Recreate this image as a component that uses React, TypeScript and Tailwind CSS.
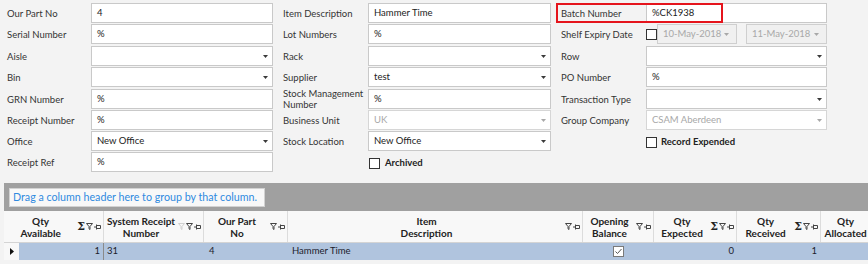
import React from 'react';

const Caret = ({ muted = false }: { muted?: boolean }) => (
  <svg width="5" height="3" viewBox="0 0 5 3" className="shrink-0">
    <path d="M0 0h5L2.5 3z" fill={muted ? '#a8a8a8' : '#3a3a3a'} />
  </svg>
);

const TextBox = ({ value = '' }: { value?: string }) => (
  <div className="flex-1 h-[20px] bg-white border border-[#c9c9c9] flex items-center px-[5px] text-[#222]">
    {value}
  </div>
);

const Combo = ({ value = '', disabled = false }: { value?: string; disabled?: boolean }) => (
  <div
    className={`flex-1 h-[20px] bg-white border flex items-center pl-[5px] pr-[4px] ${
      disabled ? 'border-[#d6d6d6] text-[#a8a8a8]' : 'border-[#c9c9c9] text-[#222]'
    }`}
  >
    <span className="flex-1">{value}</span>
    <Caret muted={disabled} />
  </div>
);

const DateBox = ({ value, w }: { value: string; w: string }) => (
  <div className={`${w} h-[20px] bg-[#f0f0f0] border border-[#cfcfcf] flex items-center pl-[5px] pr-[7px] text-[#a8a8a8]`}>
    <span className="flex-1">{value}</span>
    <Caret muted />
  </div>
);

const Box = () => <div className="w-[11px] h-[11px] shrink-0 bg-white border border-[#333]" />;

const Field = ({ label, labelW, children }: { label: React.ReactNode; labelW: string; children?: React.ReactNode }) => (
  <div className="flex items-center h-[20px]">
    <div className={`${labelW} shrink-0 leading-[11px] text-[#333]`}>{label}</div>
    {children}
  </div>
);

const rows = 'grid grid-rows-[21px_22px_21px_22px_21px_21px_21px_20px]';

const Funnel = ({ faint = false }: { faint?: boolean }) => (
  <svg width="7" height="7" viewBox="0 0 7 7" className="shrink-0">
    <path d="M0.5 0.5h6L4 3.5v3L3 5.8V3.5z" fill="none" stroke={faint ? '#cfcfcf' : '#444'} strokeWidth="1" />
  </svg>
);

const Pin = () => (
  <svg width="7" height="6" viewBox="0 0 7 6" className="shrink-0">
    <path d="M0 3h2.5M2.5 0.5v5M2.5 1.5h4v3h-4" fill="none" stroke="#444" strokeWidth="1" />
  </svg>
);

const Sigma = () => <span className="font-['DejaVu_Serif',serif] font-bold text-[11px] leading-none text-[#222]">Σ</span>;

const Head = ({
  w,
  children,
  sum = false,
  faint = false,
}: {
  w: string;
  children: React.ReactNode;
  sum?: boolean;
  faint?: boolean;
}) => (
  <div className={`${w} shrink-0 h-full flex items-center border-r border-[#dcdcdc] pr-[2px]`}>
    <div className="flex-1 text-center font-bold text-[10px] leading-[12px] text-[#222]">{children}</div>
    <div className="flex items-center gap-[1px]">
      {sum && <Sigma />}
      {faint && <Funnel faint />}
      <Funnel />
      <Pin />
    </div>
  </div>
);

export default function App() {
  return (
    <div className="w-[868px] h-[264px] bg-[#f3f3f3] overflow-hidden font-['Lato',sans-serif] text-[9.5px]">
      {/* filter form */}
      <div className="relative flex h-[183px] pt-[3px] pl-[7px]">
        <div className={`${rows} w-[266px]`}>
          <Field label="Our Part No" labelW="w-[84px]"><TextBox value="4" /></Field>
          <Field label="Serial Number" labelW="w-[84px]"><TextBox value="%" /></Field>
          <Field label="Aisle" labelW="w-[84px]"><Combo /></Field>
          <Field label="Bin" labelW="w-[84px]"><Combo /></Field>
          <Field label="GRN Number" labelW="w-[84px]"><TextBox value="%" /></Field>
          <Field label="Receipt Number" labelW="w-[84px]"><TextBox value="%" /></Field>
          <Field label="Office" labelW="w-[84px]"><Combo value="New Office" /></Field>
          <Field label="Receipt Ref" labelW="w-[84px]"><TextBox value="%" /></Field>
        </div>

        <div className={`${rows} w-[268px] ml-[10px]`}>
          <Field label="Item Description" labelW="w-[85px]"><TextBox value="Hammer Time" /></Field>
          <Field label="Lot Numbers" labelW="w-[85px]"><TextBox value="%" /></Field>
          <Field label="Rack" labelW="w-[85px]"><Combo /></Field>
          <Field label="Supplier" labelW="w-[85px]"><Combo value="test" /></Field>
          <Field label={<>Stock Management<br />Number</>} labelW="w-[85px]"><TextBox value="%" /></Field>
          <Field label="Business Unit" labelW="w-[85px]"><Combo value="UK" disabled /></Field>
          <Field label="Stock Location" labelW="w-[85px]"><Combo value="New Office" /></Field>
          <Field label="" labelW="w-[85px]">
            <div className="flex items-center gap-[5px] ml-[1px] mt-[2px]">
              <Box />
              <span className="font-bold text-[#222]">Archived</span>
            </div>
          </Field>
        </div>

        <div className={`${rows} w-[266px] ml-[10px]`}>
          <Field label="Batch Number" labelW="w-[85px]"><TextBox value="%CK1938" /></Field>
          <Field label="Shelf Expiry Date" labelW="w-[85px]">
            <div className="flex items-center">
              <Box />
              <DateBox value="10-May-2018" w="w-[80px]" />
              <div className="w-[9px]" />
              <DateBox value="11-May-2018" w="w-[81px]" />
            </div>
          </Field>
          <Field label="Row" labelW="w-[85px]"><Combo /></Field>
          <Field label="PO Number" labelW="w-[85px]"><TextBox value="%" /></Field>
          <Field label="Transaction Type" labelW="w-[85px]"><Combo /></Field>
          <Field label="Group Company" labelW="w-[85px]"><Combo value="CSAM Aberdeen" disabled /></Field>
          <Field label="" labelW="w-[85px]">
            <div className="flex items-center gap-[4px] mt-[2px]">
              <Box />
              <span className="font-bold text-[#222]">Record Expended</span>
            </div>
          </Field>
          <div />
        </div>

        {/* highlight annotation */}
        <div className="absolute left-[556px] top-[3px] w-[167px] h-[20px] border-2 border-[#e5141c]" />
      </div>

      {/* results grid */}
      <div className="ml-[4px] w-[864px] overflow-hidden">
        <div className="h-[28px] bg-[#a0a0a0] pt-[5px] pl-[5px]">
          <div className="w-[256px] h-[19px] bg-[#f8f8f8] border border-[#d2d2d2] flex items-center px-[3px] text-[10.7px] text-[#2f8ae0] whitespace-nowrap">
            Drag a column header here to group by that column.
          </div>
        </div>

        <div className="flex h-[32px] bg-[#f8f8f8] border-b border-[#d4d4d4] w-max">
          <Head w="w-[100px]" sum>Qty<br />Available</Head>
          <Head w="w-[100px]" faint>System Receipt<br />Number</Head>
          <Head w="w-[84px]">Our Part<br />No</Head>
          <Head w="w-[295px]">Item<br />Description</Head>
          <Head w="w-[71px]">Opening<br />Balance</Head>
          <Head w="w-[83px]" sum>Qty<br />Expected</Head>
          <Head w="w-[84px]" sum>Qty<br />Received</Head>
          <Head w="w-[76px]" sum>Qty<br />Allocated</Head>
        </div>

        <div className="flex h-[17px] bg-[#b0c4de] text-[#1c1c2c] w-max">
          <div className="w-[15px] shrink-0 bg-[#f8f8f8] flex items-center justify-center">
            <svg width="4" height="7" viewBox="0 0 4 7"><path d="M0 0l4 3.5L0 7z" fill="#111" /></svg>
          </div>
          <div className="w-[85px] shrink-0 flex items-center justify-end pr-[3px] border-r border-[#8a8a8a]">1</div>
          <div className="w-[100px] shrink-0 flex items-center pl-[3px]">31</div>
          <div className="w-[84px] shrink-0 flex items-center pl-[5px]">4</div>
          <div className="w-[295px] shrink-0 flex items-center pl-[4px]">Hammer Time</div>
          <div className="w-[71px] shrink-0 flex items-center justify-center">
            <svg width="11" height="11" viewBox="0 0 11 11">
              <rect x="0.5" y="0.5" width="10" height="10" fill="#fff" stroke="#7a7a7a" />
              <path d="M2.5 5.5l2 2 4-4.5" fill="none" stroke="#555" strokeWidth="1" />
            </svg>
          </div>
          <div className="w-[83px] shrink-0 flex items-center justify-end pr-[3px]">0</div>
          <div className="w-[84px] shrink-0 flex items-center justify-end pr-[4px]">1</div>
          <div className="w-[76px] shrink-0" />
        </div>
      </div>
    </div>
  );
}
